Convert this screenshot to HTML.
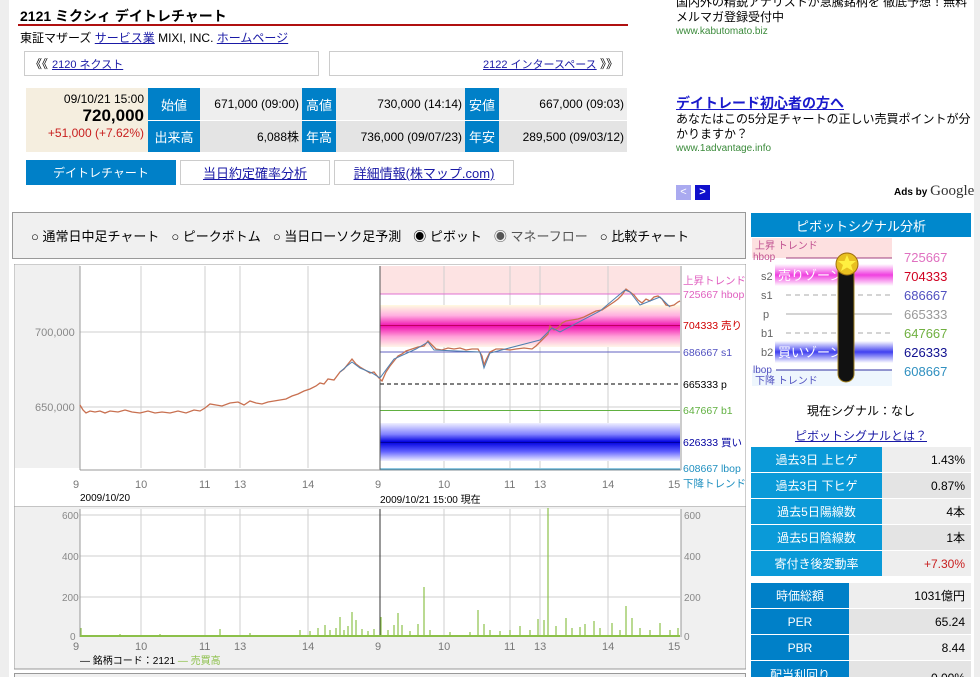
<!DOCTYPE html>
<html><head><meta charset="utf-8">
<style>
*{margin:0;padding:0;box-sizing:border-box}
html,body{width:980px;height:677px;overflow:hidden}
body{background:#fff;font-family:"Liberation Sans","Noto Sans CJK JP",sans-serif;font-size:12px;color:#000;position:relative}
.a{position:absolute}
a,.lk{color:#1a1aa6;text-decoration:underline}
.bl{background:#0080c8;color:#fff;text-align:center}
.r{text-align:right}
.tc{display:flex;align-items:center}
</style></head><body>
<div class="a" style="left:0;top:0;width:9px;height:677px;background:#eeeeee"></div>
<div class="a" style="left:974px;top:0;width:6px;height:677px;background:#eeeeee"></div>

<div class="a" style="left:20px;top:6px;font-size:14px;font-weight:bold">2121 ミクシィ デイトレチャート</div>
<div class="a" style="left:18px;top:24px;width:610px;height:2px;background:#b01010"></div>
<div class="a" style="left:20px;top:29px;font-size:12px">東証マザーズ <span class="lk">サービス業</span> MIXI, INC. <span class="lk">ホームページ</span></div>

<div class="a tc" style="left:24px;top:51px;width:295px;height:25px;border:1px solid #ccc;padding-left:5px;font-size:12px">《《 <span class="lk" style="margin-left:4px;font-size:11px">2120 ネクスト</span></div>
<div class="a tc" style="left:329px;top:51px;width:294px;height:25px;border:1px solid #ccc;justify-content:flex-end;padding-right:4px;font-size:12px"><span class="lk" style="font-size:11px">2122 インタースペース </span>&nbsp;》》</div>

<div class="a" style="left:26px;top:88px;width:122px;height:64px;background:#f5eedf;text-align:right;padding-right:4px">
<div style="margin-top:4px">09/10/21 15:00</div>
<div style="font-size:17px;font-weight:bold;line-height:20px">720,000</div>
<div style="color:#c81e1e">+51,000 (+7.62%)</div></div>
<div class="a bl tc" style="left:148px;top:88px;width:52px;height:32px;justify-content:center;font-size:13px">始値</div>
<div class="a r tc" style="left:200px;top:88px;width:102px;height:32px;background:#eee;justify-content:flex-end;padding-right:3px">671,000 (09:00)</div>
<div class="a bl tc" style="left:302px;top:88px;width:34px;height:32px;justify-content:center;font-size:13px">高値</div>
<div class="a tc" style="left:336px;top:88px;width:129px;height:32px;background:#eee;justify-content:flex-end;padding-right:3px">730,000 (14:14)</div>
<div class="a bl tc" style="left:465px;top:88px;width:34px;height:32px;justify-content:center;font-size:13px">安値</div>
<div class="a tc" style="left:499px;top:88px;width:128px;height:32px;background:#eee;justify-content:flex-end;padding-right:3px">667,000 (09:03)</div>
<div class="a bl tc" style="left:148px;top:120px;width:52px;height:32px;justify-content:center;font-size:13px;border-top:1px solid #fff">出来高</div>
<div class="a tc" style="left:200px;top:120px;width:102px;height:32px;background:#e4e4e4;justify-content:flex-end;padding-right:3px;border-top:1px solid #fff">6,088株</div>
<div class="a bl tc" style="left:302px;top:120px;width:34px;height:32px;justify-content:center;font-size:13px;border-top:1px solid #fff">年高</div>
<div class="a tc" style="left:336px;top:120px;width:129px;height:32px;background:#e4e4e4;justify-content:flex-end;padding-right:3px;border-top:1px solid #fff">736,000 (09/07/23)</div>
<div class="a bl tc" style="left:465px;top:120px;width:34px;height:32px;justify-content:center;font-size:13px;border-top:1px solid #fff">年安</div>
<div class="a tc" style="left:499px;top:120px;width:128px;height:32px;background:#e4e4e4;justify-content:flex-end;padding-right:3px;border-top:1px solid #fff">289,500 (09/03/12)</div>

<div class="a bl tc" style="left:26px;top:160px;width:150px;height:25px;justify-content:center;font-size:12px">デイトレチャート</div>
<div class="a tc" style="left:180px;top:160px;width:150px;height:25px;border:1px solid #ccc;justify-content:center;font-size:13px"><span class="lk">当日約定確率分析</span></div>
<div class="a tc" style="left:334px;top:160px;width:180px;height:25px;border:1px solid #ccc;justify-content:center;font-size:13px"><span class="lk">詳細情報(株マップ.com)</span></div>

<!-- ads -->
<div class="a" style="left:676px;top:-5px;width:298px;font-size:12px;line-height:15px">国内外の精鋭アナリストが急騰銘柄を 徹底予想！無料メルマガ登録受付中<div style="color:#3a8a3a;font-size:10px;line-height:14px">www.kabutomato.biz</div></div>
<div class="a" style="left:676px;top:95px;width:298px;font-size:12px;line-height:15px"><div style="font-size:14px;font-weight:bold;color:#1a1acc;text-decoration:underline;line-height:17px">デイトレード初心者の方へ</div>あなたはこの5分足チャートの正しい売買ポイントが分かりますか？<div style="color:#3a8a3a;font-size:10px;line-height:14px">www.1advantage.info</div></div>
<div class="a" style="left:676px;top:185px;width:15px;height:15px;background:#aaaaf0;color:#fff;font-size:11px;text-align:center;line-height:15px">&lt;</div>
<div class="a" style="left:695px;top:185px;width:15px;height:15px;background:#1010cc;color:#fff;font-size:11px;text-align:center;line-height:15px;font-weight:bold">&gt;</div>
<div class="a" style="left:894px;top:183px;font-size:10px;font-weight:bold">Ads by <span style="font-family:'Liberation Serif',serif;font-size:15px;font-weight:normal;color:#333">Google</span></div>

<!-- radio box -->
<div class="a tc" style="left:12px;top:212px;width:734px;height:47px;background:#f0f0f0;border:1px solid #999;padding-left:18px;font-size:13px">
<span>○ 通常日中足チャート</span><span style="margin-left:12px">○ ピークボトム</span><span style="margin-left:12px">○ 当日ローソク足予測</span><span style="margin-left:12px">◉ ピボット</span><span style="margin-left:12px;color:#555">◉ マネーフロー</span><span style="margin-left:12px">○ 比較チャート</span></div>

<!-- price chart -->
<svg class="a" style="left:14px;top:264px" width="732" height="243" viewBox="14 264 732 243" font-family="Liberation Sans,Noto Sans CJK JP,sans-serif" font-size="11">
<rect x="14" y="264" width="732" height="243" fill="#fff" stroke="#999"/>
<rect x="15" y="265" width="65" height="203" fill="#f0f0f0"/>
<rect x="380" y="266" width="300" height="28" fill="#fde3e3"/>
<rect x="380" y="469" width="300" height="2" fill="#e8f4fb"/>
<g stroke="#cfcfcf"><line x1="141" y1="266" x2="141" y2="468"/><line x1="205" y1="266" x2="205" y2="468"/><line x1="240" y1="266" x2="240" y2="468"/><line x1="308" y1="266" x2="308" y2="468"/><line x1="444" y1="266" x2="444" y2="468"/><line x1="510" y1="266" x2="510" y2="468"/><line x1="540" y1="266" x2="540" y2="468"/><line x1="608" y1="266" x2="608" y2="468"/><line x1="80" y1="332" x2="680" y2="332"/><line x1="80" y1="407" x2="680" y2="407"/></g>
<defs><linearGradient id="pk" x1="0" y1="0" x2="0" y2="1"><stop offset="0" stop-color="#fffbe0"/><stop offset=".25" stop-color="#ffb0e0"/><stop offset=".5" stop-color="#f010b0"/><stop offset=".75" stop-color="#ffa0d8"/><stop offset="1" stop-color="#fff6e8"/></linearGradient>
<linearGradient id="bu" x1="0" y1="0" x2="0" y2="1"><stop offset="0" stop-color="#f0f0ff"/><stop offset=".3" stop-color="#8080ff"/><stop offset=".5" stop-color="#0000e0"/><stop offset=".75" stop-color="#6060ff"/><stop offset="1" stop-color="#f0f0ff"/></linearGradient></defs>
<rect x="380" y="305" width="300" height="42" fill="url(#pk)"/>
<rect x="380" y="423" width="300" height="38" fill="url(#bu)"/>
<line x1="380" y1="294" x2="680" y2="294" stroke="#e070d0"/>
<line x1="380" y1="325.5" x2="680" y2="325.5" stroke="#c00060"/>
<line x1="380" y1="352" x2="680" y2="352" stroke="#6060c0"/>
<line x1="380" y1="384" x2="680" y2="384" stroke="#000" stroke-dasharray="4,3"/>
<line x1="380" y1="410.5" x2="680" y2="410.5" stroke="#60b040"/>
<line x1="380" y1="442.5" x2="680" y2="442.5" stroke="#0000a0"/>
<line x1="380" y1="469" x2="680" y2="469" stroke="#2090c0"/>
<line x1="380" y1="266" x2="380" y2="470" stroke="#555"/>
<line x1="80" y1="266" x2="80" y2="470" stroke="#999"/>
<line x1="681" y1="266" x2="681" y2="470" stroke="#999"/>
<line x1="80" y1="470" x2="681" y2="470" stroke="#999"/>
<polyline fill="none" stroke="#c87050" stroke-width="1.3" points="80,405 83,410 86,413 90,411 95,412 100,411 105,413 110,411 118,412 125,410 132,412 140,413 148,411 155,413 162,412 170,413 178,411 186,413 194,410 200,411 205,408 210,404 216,405 222,406 230,403 238,402 244,405 250,401 256,403 262,404 268,402 274,401 280,400 286,399 292,396 298,394 304,391 310,389 316,386 320,383 324,384 328,379 334,380 340,372 344,369 348,364 352,359 356,364 360,367 365,370 370,373 374,372 378,377 382,381 386,372 390,366 394,361 398,356 402,354 406,351 412,349 418,347 424,346 428,341 432,345 436,349 442,350 448,348 454,349 460,348 466,350 472,349 478,349 482,356 484,365 486,360 490,352 496,349 502,349 510,350 516,349 524,348 532,349 536,346 540,342 544,338 548,334 550,326 554,330 558,328 562,323 566,321 572,320 578,319 584,317 590,314 596,311 602,310 608,306 614,302 618,299 622,295 626,289 630,292 634,295 638,300 642,303 646,299 650,301 654,297 658,296 662,299 666,305 670,306 674,305 678,302 680,301"/>
<polyline fill="none" stroke="#5080b0" stroke-width="1" points="340,372 347,366 352,362 360,368 372,373 380,378 394,359 416,349 428,342 434,350 480,352 484,368 490,353 540,340 552,328 560,332 600,311 625,290 630,292 640,305 660,297 670,307"/>
<g fill="#888"><text x="35" y="336">700,000</text><text x="35" y="411">650,000</text></g>
<g fill="#777" font-size="11"><text x="73" y="488">9</text><text x="135" y="488">10</text><text x="199" y="488">11</text><text x="234" y="488">13</text><text x="302" y="488">14</text><text x="375" y="488">9</text><text x="438" y="488">10</text><text x="504" y="488">11</text><text x="534" y="488">13</text><text x="602" y="488">14</text><text x="668" y="488">15</text></g>
<text x="80" y="501" font-size="10">2009/10/20</text>
<text x="380" y="503" font-size="10">2009/10/21 15:00 現在</text>
<g font-size="10.5"><text x="683" y="284" fill="#e060c0">上昇トレンド</text><text x="683" y="298" fill="#e060c0">725667 hbop</text><text x="683" y="329" fill="#d00000">704333 売り</text><text x="683" y="356" fill="#5050c0">686667 s1</text><text x="683" y="388" fill="#000">665333 p</text><text x="683" y="414" fill="#60b040">647667 b1</text><text x="683" y="446" fill="#0000a0">626333 買い</text><text x="683" y="472" fill="#2090c0">608667 lbop</text><text x="683" y="487" fill="#2090c0">下降トレンド</text></g>
</svg>

<!-- volume chart -->
<svg class="a" style="left:14px;top:506px" width="732" height="164" viewBox="14 506 732 164" font-family="Liberation Sans,Noto Sans CJK JP,sans-serif" font-size="10">
<rect x="14" y="506" width="732" height="163" fill="#f0f0f0" stroke="#999"/>
<rect x="80" y="509" width="601" height="128" fill="#fff"/>
<g stroke="#cfcfcf"><line x1="141" y1="509" x2="141" y2="637"/><line x1="205" y1="509" x2="205" y2="637"/><line x1="240" y1="509" x2="240" y2="637"/><line x1="308" y1="509" x2="308" y2="637"/><line x1="444" y1="509" x2="444" y2="637"/><line x1="510" y1="509" x2="510" y2="637"/><line x1="540" y1="509" x2="540" y2="637"/><line x1="608" y1="509" x2="608" y2="637"/><line x1="80" y1="515" x2="680" y2="515"/><line x1="80" y1="556" x2="680" y2="556"/><line x1="80" y1="597" x2="680" y2="597"/></g>
<line x1="380" y1="509" x2="380" y2="637" stroke="#333"/>
<line x1="80" y1="509" x2="80" y2="637" stroke="#999"/>
<line x1="681" y1="509" x2="681" y2="637" stroke="#999"/>
<rect x="80" y="635" width="600" height="2" fill="#8cc04a"/>
<g stroke="#8cc04a" stroke-width="1.2"><line x1="81" y1="637" x2="81" y2="628"/><line x1="120" y1="637" x2="120" y2="634"/><line x1="160" y1="637" x2="160" y2="634"/><line x1="220" y1="637" x2="220" y2="629"/><line x1="250" y1="637" x2="250" y2="633"/><line x1="300" y1="637" x2="300" y2="630"/><line x1="310" y1="637" x2="310" y2="631"/><line x1="318" y1="637" x2="318" y2="628"/><line x1="325" y1="637" x2="325" y2="625"/><line x1="330" y1="637" x2="330" y2="630"/><line x1="336" y1="637" x2="336" y2="628"/><line x1="340" y1="637" x2="340" y2="617"/><line x1="344" y1="637" x2="344" y2="630"/><line x1="348" y1="637" x2="348" y2="626"/><line x1="352" y1="637" x2="352" y2="612"/><line x1="356" y1="637" x2="356" y2="620"/><line x1="362" y1="637" x2="362" y2="629"/><line x1="368" y1="637" x2="368" y2="631"/><line x1="374" y1="637" x2="374" y2="629"/><line x1="381" y1="637" x2="381" y2="617"/><line x1="388" y1="637" x2="388" y2="630"/><line x1="394" y1="637" x2="394" y2="625"/><line x1="398" y1="637" x2="398" y2="613"/><line x1="402" y1="637" x2="402" y2="625"/><line x1="410" y1="637" x2="410" y2="631"/><line x1="418" y1="637" x2="418" y2="624"/><line x1="424" y1="637" x2="424" y2="587"/><line x1="430" y1="637" x2="430" y2="630"/><line x1="450" y1="637" x2="450" y2="632"/><line x1="470" y1="637" x2="470" y2="632"/><line x1="478" y1="637" x2="478" y2="610"/><line x1="484" y1="637" x2="484" y2="624"/><line x1="490" y1="637" x2="490" y2="630"/><line x1="500" y1="637" x2="500" y2="631"/><line x1="510" y1="637" x2="510" y2="630"/><line x1="520" y1="637" x2="520" y2="626"/><line x1="530" y1="637" x2="530" y2="630"/><line x1="538" y1="637" x2="538" y2="619"/><line x1="544" y1="637" x2="544" y2="620"/><line x1="548" y1="637" x2="548" y2="508"/><line x1="556" y1="637" x2="556" y2="626"/><line x1="566" y1="637" x2="566" y2="618"/><line x1="572" y1="637" x2="572" y2="628"/><line x1="580" y1="637" x2="580" y2="627"/><line x1="585" y1="637" x2="585" y2="624"/><line x1="594" y1="637" x2="594" y2="621"/><line x1="600" y1="637" x2="600" y2="628"/><line x1="612" y1="637" x2="612" y2="623"/><line x1="620" y1="637" x2="620" y2="630"/><line x1="626" y1="637" x2="626" y2="606"/><line x1="632" y1="637" x2="632" y2="618"/><line x1="640" y1="637" x2="640" y2="628"/><line x1="650" y1="637" x2="650" y2="630"/><line x1="660" y1="637" x2="660" y2="623"/><line x1="670" y1="637" x2="670" y2="630"/><line x1="678" y1="637" x2="678" y2="628"/></g>
<g fill="#888"><text x="62" y="519">600</text><text x="62" y="560">400</text><text x="62" y="601">200</text><text x="70" y="640">0</text><text x="684" y="519">600</text><text x="684" y="560">400</text><text x="684" y="601">200</text><text x="684" y="640">0</text></g>
<g fill="#777" font-size="11"><text x="73" y="650">9</text><text x="135" y="650">10</text><text x="199" y="650">11</text><text x="234" y="650">13</text><text x="302" y="650">14</text><text x="375" y="650">9</text><text x="438" y="650">10</text><text x="504" y="650">11</text><text x="534" y="650">13</text><text x="602" y="650">14</text><text x="668" y="650">15</text></g>
<text x="80" y="664">— 銘柄コード：2121 <tspan fill="#8cc04a">— 売買高</tspan></text>
</svg>
<div class="a" style="left:14px;top:673px;width:732px;height:10px;border:1px solid #999;background:#f0f0f0"></div>

<!-- right panel -->
<div class="a tc" style="left:751px;top:213px;width:220px;height:24px;background:#0088cc;color:#fff;justify-content:center;font-size:13px">ピボットシグナル分析</div>
<svg class="a" style="left:751px;top:237px" width="220" height="150" viewBox="751 237 220 150" font-family="Liberation Sans,Noto Sans CJK JP,sans-serif" font-size="11">
<defs><linearGradient id="pz" x1="0" y1="0" x2="0" y2="1"><stop offset="0" stop-color="#fff"/><stop offset=".5" stop-color="#f040e0"/><stop offset="1" stop-color="#fff"/></linearGradient>
<linearGradient id="bz" x1="0" y1="0" x2="0" y2="1"><stop offset="0" stop-color="#fff"/><stop offset=".5" stop-color="#4040f0"/><stop offset="1" stop-color="#fff"/></linearGradient></defs>
<rect x="752" y="238" width="140" height="20" fill="#fde0e0"/>
<rect x="752" y="370" width="140" height="16" fill="#eef6fd"/>
<text x="755" y="249" fill="#c05090" font-size="10">上昇 トレンド</text>
<text x="753" y="260" fill="#c05090" font-size="10">hbop</text>
<line x1="786" y1="258" x2="892" y2="258" stroke="#a04080"/>
<rect x="775" y="264" width="118" height="22" fill="url(#pz)"/>
<text x="778" y="280" fill="#fff" font-size="13">売りゾーン</text>
<text x="761" y="280" fill="#666">s2</text>
<text x="761" y="299" fill="#666">s1</text>
<line x1="786" y1="295" x2="892" y2="295" stroke="#aaa" stroke-dasharray="5,4"/>
<text x="763" y="318" fill="#666">p</text>
<line x1="786" y1="314" x2="892" y2="314" stroke="#aaa"/>
<text x="761" y="337" fill="#666">b1</text>
<line x1="786" y1="333" x2="892" y2="333" stroke="#aaa" stroke-dasharray="5,4"/>
<rect x="775" y="341" width="118" height="22" fill="url(#bz)"/>
<text x="778" y="357" fill="#fff" font-size="13">買いゾーン</text>
<text x="761" y="356" fill="#666">b2</text>
<text x="753" y="373" fill="#5050c0" font-size="10">lbop</text>
<line x1="776" y1="370" x2="892" y2="370" stroke="#3030a0"/>
<text x="755" y="384" fill="#5050c0" font-size="10">下降 トレンド</text>
<rect x="838" y="254" width="16" height="128" rx="8" fill="#111" stroke="#a08020"/>
<circle cx="847" cy="264" r="11" fill="#e8c020" stroke="#a07010"/>
<polygon points="847,255 849.5,261 856,261 851,265 853,271 847,267.5 841,271 843,265 838,261 844.5,261" fill="#fff040"/>
<g font-size="13"><text x="904" y="262" fill="#e070c0">725667</text><text x="904" y="281" fill="#d00020">704333</text><text x="904" y="300" fill="#5050c0">686667</text><text x="904" y="319" fill="#999">665333</text><text x="904" y="338" fill="#70b040">647667</text><text x="904" y="357" fill="#101090">626333</text><text x="904" y="376" fill="#3090c0">608667</text></g>
</svg>
<div class="a" style="left:751px;top:402px;width:220px;text-align:center;font-size:12px">現在シグナル：なし</div>
<div class="a" style="left:751px;top:427px;width:220px;text-align:center;font-size:12px"><span class="lk">ピボットシグナルとは？</span></div>

<div class="a" style="left:751px;top:447px;width:220px;font-size:12px">
<div style="display:flex;height:26px;border-bottom:1px solid #fff"><div class="tc" style="width:131px;background:#0a9ad8;color:#fff;justify-content:center">過去3日 上ヒゲ</div><div class="tc" style="flex:1;background:#eee;justify-content:flex-end;padding-right:6px">1.43%</div></div>
<div style="display:flex;height:26px;border-bottom:1px solid #fff"><div class="tc" style="width:131px;background:#0a9ad8;color:#fff;justify-content:center">過去3日 下ヒゲ</div><div class="tc" style="flex:1;background:#e4e4e4;justify-content:flex-end;padding-right:6px">0.87%</div></div>
<div style="display:flex;height:26px;border-bottom:1px solid #fff"><div class="tc" style="width:131px;background:#0a9ad8;color:#fff;justify-content:center">過去5日陽線数</div><div class="tc" style="flex:1;background:#eee;justify-content:flex-end;padding-right:6px">4本</div></div>
<div style="display:flex;height:26px;border-bottom:1px solid #fff"><div class="tc" style="width:131px;background:#0a9ad8;color:#fff;justify-content:center">過去5日陰線数</div><div class="tc" style="flex:1;background:#e4e4e4;justify-content:flex-end;padding-right:6px">1本</div></div>
<div style="display:flex;height:25px"><div class="tc" style="width:131px;background:#0a9ad8;color:#fff;justify-content:center">寄付き後変動率</div><div class="tc" style="flex:1;background:#eee;justify-content:flex-end;padding-right:6px;color:#c81e1e">+7.30%</div></div>
</div>
<div class="a" style="left:751px;top:583px;width:220px;font-size:12px">
<div style="display:flex;height:26px;border-bottom:1px solid #fff"><div class="tc" style="width:98px;background:#0080c8;color:#fff;justify-content:center">時価総額</div><div class="tc" style="flex:1;background:#eee;justify-content:flex-end;padding-right:6px">1031億円</div></div>
<div style="display:flex;height:26px;border-bottom:1px solid #fff"><div class="tc" style="width:98px;background:#0080c8;color:#fff;justify-content:center">PER</div><div class="tc" style="flex:1;background:#e4e4e4;justify-content:flex-end;padding-right:6px">65.24</div></div>
<div style="display:flex;height:26px;border-bottom:1px solid #fff"><div class="tc" style="width:98px;background:#0080c8;color:#fff;justify-content:center">PBR</div><div class="tc" style="flex:1;background:#eee;justify-content:flex-end;padding-right:6px">8.44</div></div>
<div style="display:flex;height:26px"><div class="tc" style="width:98px;background:#0080c8;color:#fff;justify-content:center">配当利回り</div><div class="tc" style="flex:1;background:#e4e4e4;justify-content:flex-end;padding-right:6px;padding-top:8px">0.00%</div></div>
</div>
</body></html>
